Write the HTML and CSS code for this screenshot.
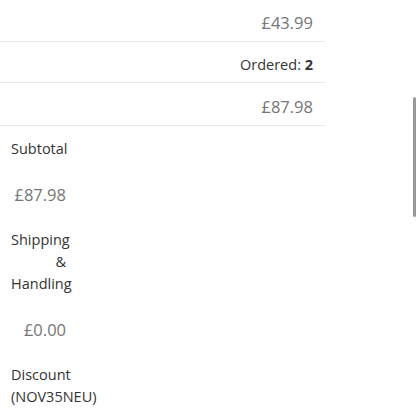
FILE: index.html
```html
<!DOCTYPE html>
<html lang="en">
<head>
  <meta charset="UTF-8">
  <meta name="viewport" content="width=device-width, initial-scale=1.0">
  <title>Order Summary</title>
  <link rel="stylesheet" href="styles.css">
</head>
<body>
  <div class="order">
    <div class="items">
      <div class="item-row price">£43.99</div>
      <div class="item-row qty">Ordered: <strong>2</strong></div>
      <div class="item-row price">£87.98</div>
    </div>
    <div class="totals">
      <div class="total-label">Subtotal</div>
      <div class="total-amount">£87.98</div>
      <div class="total-label">Shipping &amp; Handling</div>
      <div class="total-amount">£0.00</div>
      <div class="total-label">Discount (NOV35NEU)</div>
    </div>
  </div>
  <div class="scrollbar"></div>
</body>
</html>
```

FILE: styles.css
```css
body {
  margin: 0;
  padding: 0;
  font-family: "Open Sans", Arial, sans-serif;
  background: #fff;
  color: #333;
  height: 420px;
  overflow: hidden;
}
.items {
  width: 325px;
  margin-top: -1px;
}
.item-row {
  text-align: right;
  padding: 12px 12px 6px 0;
  border-bottom: 1px solid #e8e8e8;
}
.price {
  font-size: 16.5px;
  line-height: 24px;
  color: #757575;
}
.qty {
  font-size: 14.5px;
  line-height: 22px;
  color: #333;
}
.qty strong {
  font-weight: 700;
}
.totals {
  width: 55px;
  margin-left: 11px;
}
.total-label, .total-amount {
  text-align: right;
  padding: 12px 0 11.5px;
  line-height: 22px;
}
.total-label {
  font-size: 14.5px;
  color: #333;
}
.total-amount {
  font-size: 16.5px;
  color: #757575;
}
.scrollbar {
  position: absolute;
  left: 413px;
  top: 97px;
  width: 3px;
  height: 120px;
  background: #999;
  border-radius: 2px;
}
```
